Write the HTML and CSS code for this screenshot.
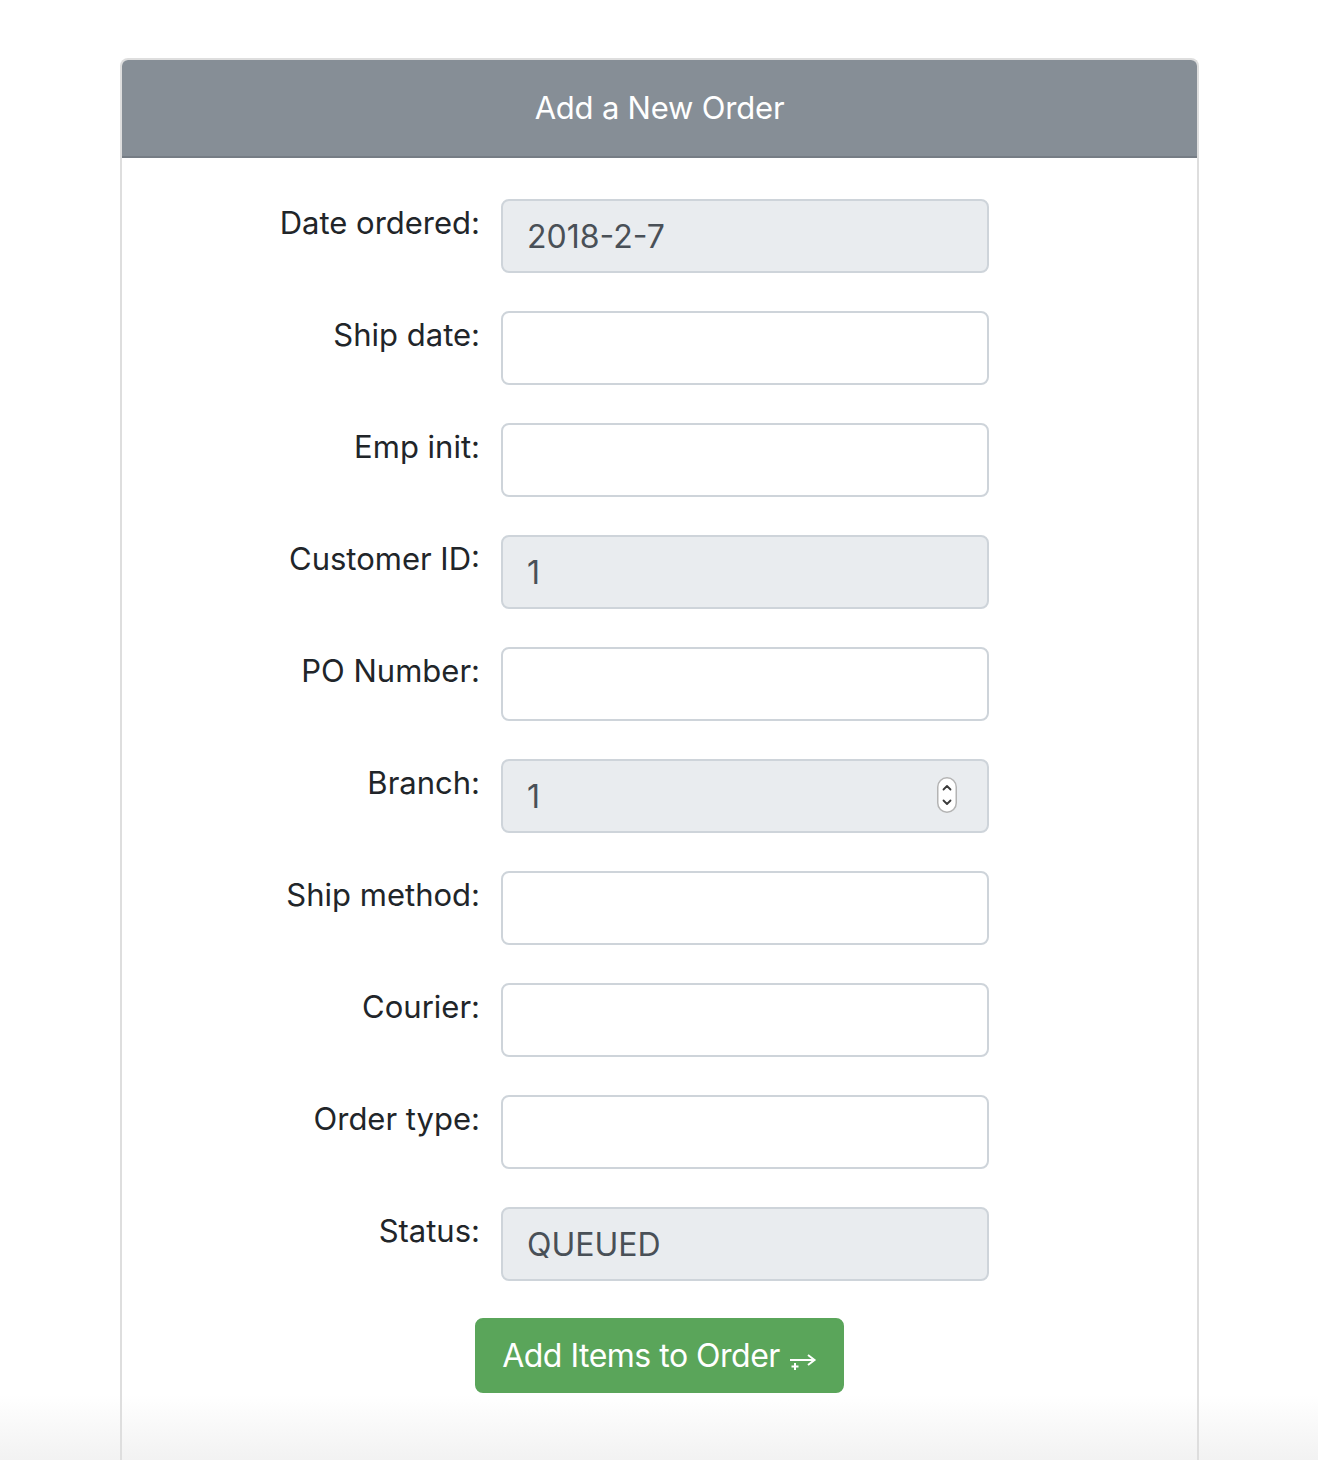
FILE: index.html
```html
<!DOCTYPE html>
<html lang="en">
<head>
<meta charset="utf-8">
<title>Add a New Order</title>
<link rel="stylesheet" href="styles.css">
</head>
<body>
<div class="card">
  <div class="card-header">Add a New Order</div>
  <form class="card-body">
    <div class="row"><label class="lbl">Date ordered:</label><input class="field ro" type="text" value="2018-2-7" readonly></div>
    <div class="row"><label class="lbl">Ship date:</label><input class="field" type="text"></div>
    <div class="row"><label class="lbl">Emp init:</label><input class="field" type="text"></div>
    <div class="row"><label class="lbl">Customer ID:</label><input class="field ro" type="text" value="1" readonly></div>
    <div class="row"><label class="lbl">PO Number:</label><input class="field" type="text"></div>
    <div class="row"><label class="lbl">Branch:</label>
      <div class="num-wrap"><input class="field ro" type="text" value="1" readonly>
        <span class="stepper"><svg width="20" height="36" viewBox="0 0 20 36"><rect x="0.75" y="0.75" width="18.5" height="34.5" rx="9.25" fill="#fff" stroke="#b4b4b4" stroke-width="1.5"/><path d="M6.5 12.5 L10 9 L13.5 12.5" fill="none" stroke="#3a3a3a" stroke-width="1.8" stroke-linecap="round" stroke-linejoin="round"/><path d="M6.5 23.5 L10 27 L13.5 23.5" fill="none" stroke="#3a3a3a" stroke-width="1.8" stroke-linecap="round" stroke-linejoin="round"/></svg></span>
      </div>
    </div>
    <div class="row"><label class="lbl">Ship method:</label><input class="field" type="text"></div>
    <div class="row"><label class="lbl">Courier:</label><input class="field" type="text"></div>
    <div class="row"><label class="lbl">Order type:</label><input class="field" type="text"></div>
    <div class="row"><label class="lbl">Status:</label><input class="field ro" type="text" value="QUEUED" readonly></div>
    <div class="actions">
      <button type="button" class="btn">Add Items to Order <svg class="btn-icon" width="28" height="20" viewBox="0 0 28 20"><path d="M1 8 H25" stroke="#fff" stroke-width="2" fill="none"/><path d="M19 3 L25.5 8 L19 13" stroke="#fff" stroke-width="2" fill="none" stroke-linejoin="miter"/><path d="M6 11 V18 M2.5 14.5 H9.5" stroke="#fff" stroke-width="2" fill="none"/></svg></button>
    </div>
  </form>
</div>
</body>
</html>
```
FILE: styles.css
```css
html, body {
  margin: 0;
  padding: 0;
}
body {
  font-family: "Inter", "Liberation Sans", sans-serif;
  font-size: 32px;
  line-height: 48px;
  color: #212529;
  height: 1460px;
  overflow: hidden;
  background: linear-gradient(to bottom, #ffffff 0, #ffffff 1395px, #f2f2f2 1460px);
}
.card {
  width: 1079px;
  margin: 58px 0 0 120px;
  border: 2px solid #dedede;
  border-bottom: none;
  border-radius: 8px 8px 0 0;
  box-sizing: border-box;
  min-height: 1420px;
}
.card-header {
  background: #868e96;
  color: #fff;
  text-align: center;
  padding: 24px 40px;
  border-bottom: 2px solid #767d85;
  border-radius: 6px 6px 0 0;
  font-size: 31px;
  letter-spacing: -0.2px;
}
.card-body {
  display: flex;
  flex-direction: column;
  gap: 38px;
  padding: 41px 40px 40px;
  margin: 0;
}
.row {
  display: grid;
  grid-template-columns: 318px 488px;
  column-gap: 21px;
  align-items: start;
}
.lbl {
  text-align: right;
  line-height: 48px;
  font-size: 31px;
  color: #212529;
}
.field {
  display: block;
  width: 488px;
  height: 74px;
  box-sizing: border-box;
  padding: 12px 24px;
  border: 2px solid #ced4da;
  border-radius: 8px;
  background: #fff;
  font-family: inherit;
  font-size: 32px;
  line-height: 48px;
  color: #495057;
  margin: 0;
  outline: none;
}
.field.ro {
  background: #e9ecef;
}
.num-wrap {
  position: relative;
  width: 488px;
}
.stepper {
  position: absolute;
  left: 436px;
  top: 18px;
  width: 20px;
  height: 36px;
  display: block;
}
.stepper svg {
  display: block;
}
.actions {
  display: flex;
  justify-content: center;
  margin-top: -1px;
}
.btn {
  display: inline-flex;
  align-items: center;
  height: 75px;
  box-sizing: border-box;
  padding: 12px 25px;
  border: 2px solid #5aa55a;
  border-radius: 8px;
  background: #5aa55a;
  color: #fff;
  font-family: inherit;
  font-size: 32px;
  line-height: 48px;
  letter-spacing: -0.5px;
}
.btn-icon {
  margin-left: 9px;
  margin-top: 12px;
  display: block;
}
```
